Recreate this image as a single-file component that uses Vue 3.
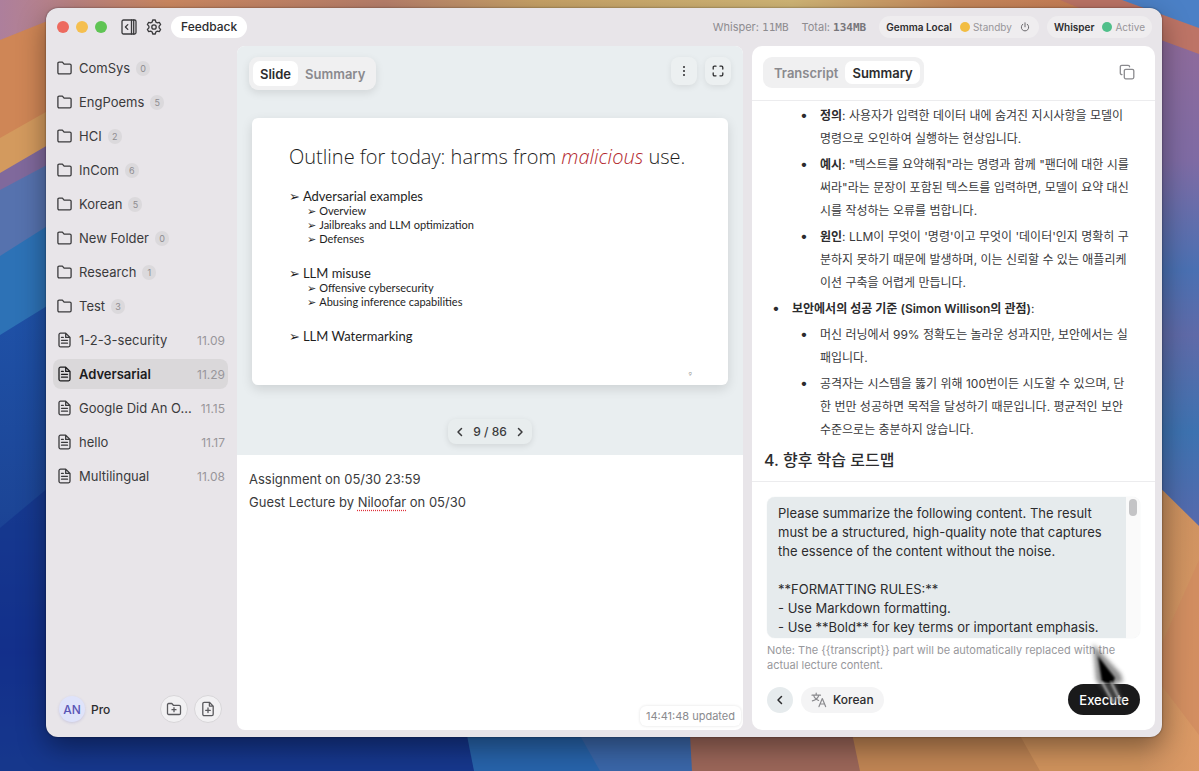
<template>
  <div class="desktop">
    <svg class="wallpaper" viewBox="0 0 1199 771" preserveAspectRatio="none" aria-hidden="true">
      <defs>
        <linearGradient id="topBand" x1="0" x2="1" y1="0" y2="0">
          <stop offset="0" stop-color="#ad7f9c" />
          <stop offset="0.14" stop-color="#cf8a62" />
          <stop offset="0.32" stop-color="#b9806c" />
          <stop offset="0.45" stop-color="#c9a468" />
          <stop offset="0.66" stop-color="#d3b878" />
          <stop offset="0.8" stop-color="#c8895c" />
          <stop offset="1" stop-color="#c9734f" />
        </linearGradient>
        <linearGradient id="leftDeep" x1="0" x2="0" y1="0" y2="1">
          <stop offset="0" stop-color="#1f52a8" />
          <stop offset="0.45" stop-color="#1c4596" />
          <stop offset="0.75" stop-color="#142f8c" />
          <stop offset="1" stop-color="#1d4390" />
        </linearGradient>
        <linearGradient id="rightSky" x1="0" x2="0" y1="0" y2="1">
          <stop offset="0" stop-color="#946b98" />
          <stop offset="0.3" stop-color="#7e6ba4" />
          <stop offset="0.5" stop-color="#4a70b2" />
          <stop offset="0.62" stop-color="#5f6aa8" />
          <stop offset="0.8" stop-color="#3d72b0" />
          <stop offset="1" stop-color="#5a68ac" />
        </linearGradient>
        <linearGradient id="rightSand" x1="0" x2="1" y1="0" y2="1">
          <stop offset="0" stop-color="#c08a5a" />
          <stop offset="1" stop-color="#dc9a66" />
        </linearGradient>
      </defs>
      <rect width="1199" height="771" fill="url(#leftDeep)" />
      <rect width="1199" height="300" fill="url(#topBand)" />
      <path d="M0 40 L60 16 L60 110 L0 140 Z" fill="#cf8656" />
      <path d="M0 138 L60 104 L60 140 L0 175 Z" fill="#d39a5e" />
      <path d="M0 173 L60 138 L60 160 L0 192 Z" fill="#80699c" />
      <path d="M0 190 L60 158 L60 220 L0 258 Z" fill="#5672ae" />
      <path d="M0 256 L60 218 L60 300 L0 337 Z" fill="#2d72b6" />
      <path d="M0 335 L60 298 L500 298 L500 771 L0 771 Z" fill="url(#leftDeep)" />
      <path d="M0 528 L60 478 L500 600 L500 771 L0 771 Z" fill="#12308a" opacity="0.6" />
      <path d="M460 700 L474 771 L700 771 L690 700 Z" fill="#2763aa" />
      <path d="M560 700 L600 771 L700 771 L690 700 Z" fill="#3a66a8" />
      <path d="M688 700 L692 771 L870 771 L850 700 Z" fill="#9b6659" />
      <path d="M845 700 L860 771 L1199 771 L1199 700 Z" fill="#c08554" />
      <path d="M1000 700 L1040 771 L1199 771 L1199 700 Z" fill="#cf925c" />
      <rect x="1140" y="0" width="59" height="540" fill="url(#rightSky)" />
      <path d="M1110 0 L1199 0 L1199 30 L1160 18 Z" fill="#4b80c6" />
      <path d="M1060 0 L1122 0 L1199 28 L1199 54 L1120 25 Z" fill="#bd7466" />
      <path d="M1140 468 L1199 526 L1199 771 L1140 771 Z" fill="url(#rightSand)" />
      <path d="M1150 670 L1199 735 L1199 560 Z" fill="#d08a60" opacity="0.7" />
    </svg>

    <div class="window">
      <header class="titlebar">
        <div class="lights"><i class="red"></i><i class="amber"></i><i class="green"></i></div>
        <button class="plain" aria-label="Toggle sidebar">
          <svg width="16" height="16" viewBox="0 0 16 16"><rect x="1" y="1" width="14" height="14" rx="1.5" /><path d="M10.500 1v14M12.700 1v14M6.800 5.600 4.400 8l2.400 2.400" /></svg>
        </button>
        <button class="plain" aria-label="Settings">
          <svg width="16" height="16" viewBox="0 0 16 16"><path d="M6.700 1h2.600l.5 2 1.500.9 2-.6 1.300 2.300-1.500 1.500v1.800l1.500 1.500-1.300 2.300-2-.6-1.500.9-.5 2H6.700l-.5-2-1.500-.9-2 .6-1.300-2.300 1.500-1.500V7.100L1.400 5.600l1.300-2.300 2 .6L6.200 3z" /><circle cx="8" cy="8" r="2.200" /></svg>
        </button>
        <button class="feedback">Feedback</button>
        <div class="status">
          <span class="mem">Whisper: <code>11MB</code></span>
          <span class="mem">Total: <code class="strong">134MB</code></span>
          <div class="pill">
            <b>Gemma Local</b>
            <span class="state"><i class="standby"></i>Standby</span>
            <button class="plain power" aria-label="Turn on Gemma">
              <svg width="10" height="10" viewBox="0 0 10 10"><path d="M5 .8v4M2.800 2.200a3.700 3.700 0 1 0 4.400 0" /></svg>
            </button>
          </div>
          <div class="pill">
            <b>Whisper</b>
            <span class="state"><i class="active"></i>Active</span>
          </div>
        </div>
      </header>

      <aside class="sidebar">
        <ul class="files">
          <li v-for="item in items" :key="item.name">
            <button class="row" :class="{ selected: item.name === selected }" @click="selected = item.name">
              <svg v-if="item.date" width="15" height="16" viewBox="0 0 15 16"><path d="M2 2.700C2 1.800 2.700 1.200 3.500 1.200h5.200L13 5.400v7.900c0 .9-.7 1.500-1.500 1.500h-8c-.8 0-1.500-.6-1.500-1.500zM8.700 1.200v4.200H13M4.500 5.400h1.800M4.500 8.300h6M4.500 11.200h6" /></svg>
              <svg v-else width="15" height="16" viewBox="0 0 15 16"><path d="M.9 3.300c0-.7.5-1.200 1.200-1.200h3.300l1.700 2h5.800c.7 0 1.200.5 1.200 1.200v7.300c0 .7-.5 1.200-1.200 1.200H2.100c-.7 0-1.200-.5-1.200-1.200z" /></svg>
              <span class="name">{{ item.name }}</span>
              <span v-if="item.date" class="date">{{ item.date }}</span>
              <span v-else class="count">{{ item.count }}</span>
            </button>
          </li>
        </ul>
        <div class="account">
          <span class="avatar">AN</span>
          <span class="plan">Pro</span>
          <button class="round" aria-label="New folder">
            <svg width="16" height="16" viewBox="0 0 16 16"><path d="M1.500 3.700c0-.7.5-1.200 1.200-1.200h3.100l1.600 1.800h5.900c.7 0 1.200.5 1.200 1.200v6.800c0 .7-.5 1.200-1.200 1.200H2.700c-.7 0-1.200-.5-1.200-1.200zM8 6.700v4M6 8.700h4" /></svg>
          </button>
          <button class="round" aria-label="New note">
            <svg width="16" height="16" viewBox="0 0 16 16"><path d="M2.800 2.700c0-.8.600-1.400 1.400-1.400h5.200l3.800 3.800v8.200c0 .8-.6 1.400-1.400 1.400H4.200c-.8 0-1.400-.6-1.400-1.400zM9.400 1.300v3.800h3.800M8 7v4.600M5.700 9.300h4.600" /></svg>
          </button>
        </div>
      </aside>

      <main class="lecture">
        <section class="viewer">
          <div class="toolbar">
            <div class="tabs raised">
              <button class="on">Slide</button>
              <button>Summary</button>
            </div>
            <div class="tools">
              <button class="tool" aria-label="More">
                <svg class="dots" width="12" height="12" viewBox="0 0 12 12"><circle cx="6" cy="2" r="1" /><circle cx="6" cy="6" r="1" /><circle cx="6" cy="10" r="1" /></svg>
              </button>
              <button class="tool" aria-label="Full screen">
                <svg width="12" height="12" viewBox="0 0 12 12"><path d="M1.200 4V2.400c0-.7.500-1.200 1.200-1.200H4M8 1.200h1.600c.7 0 1.200.5 1.200 1.200V4M10.800 8v1.600c0 .7-.5 1.200-1.200 1.200H8M4 10.800H2.400c-.7 0-1.200-.5-1.200-1.200V8" /></svg>
              </button>
            </div>
          </div>
          <article class="slide">
            <h1>Outline for today: harms from <em>malicious</em> use.</h1>
            <ul>
              <li v-for="topic in outline" :key="topic.title">
                <p>{{ topic.title }}</p>
                <ul v-if="topic.points.length">
                  <li v-for="point in topic.points" :key="point">{{ point }}</li>
                </ul>
              </li>
            </ul>
            <small>9</small>
          </article>
          <nav class="pager">
            <button class="plain" aria-label="Previous slide"><svg width="12" height="12" viewBox="0 0 12 12"><path d="M7.500 2.500 4 6l3.500 3.500" /></svg></button>
            <span>9 / 86</span>
            <button class="plain" aria-label="Next slide"><svg width="12" height="12" viewBox="0 0 12 12"><path d="M4.500 2.500 8 6 4.500 9.500" /></svg></button>
          </nav>
        </section>
        <section class="notes">
          <div class="note-text" contenteditable="true" spellcheck="false" role="textbox" aria-label="Notes">
            <p>Assignment on 05/30 23:59</p>
            <p>Guest Lecture by <span class="typo">Niloofar</span> on 05/30</p>
          </div>
          <span class="saved">14:41:48 updated</span>
        </section>
      </main>

      <section class="assistant">
        <div class="assistant-head">
          <div class="tabs">
            <button>Transcript</button>
            <button class="on">Summary</button>
          </div>
          <button class="plain copy" aria-label="Copy">
            <svg width="16" height="16" viewBox="0 0 16 16"><rect x="5.300" y="5.300" width="9.500" height="9.500" rx="1.500" /><path d="M3 10.600c-1 0-1.700-.6-1.700-1.500V2.800c0-.9.600-1.500 1.500-1.500h6.300c.9 0 1.500.6 1.500 1.500" /></svg>
          </button>
        </div>

        <div class="summary" lang="ko">
          <ul class="outer">
            <li class="cont">
              <ul>
                <li><b>정의</b>: 사용자가 입력한 데이터 내에 숨겨진 지시사항을 모델이<br>명령으로 오인하여 실행하는 현상입니다.</li>
                <li><b>예시</b>: "텍스트를 요약해줘"라는 명령과 함께 "팬더에 대한 시를<br>써라"라는 문장이 포함된 텍스트를 입력하면, 모델이 요약 대신<br>시를 작성하는 오류를 범합니다.</li>
                <li><b>원인</b>: LLM이 무엇이 '명령'이고 무엇이 '데이터'인지 명확히 구<br>분하지 못하기 때문에 발생하며, 이는 신뢰할 수 있는 애플리케<br>이션 구축을 어렵게 만듭니다.</li>
              </ul>
            </li>
            <li>
              <b>보안에서의 성공 기준 (Simon Willison의 관점)</b>:
              <ul>
                <li>머신 러닝에서 99% 정확도는 놀라운 성과지만, 보안에서는 실<br>패입니다.</li>
                <li>공격자는 시스템을 뚫기 위해 100번이든 시도할 수 있으며, 단<br>한 번만 성공하면 목적을 달성하기 때문입니다. 평균적인 보안<br>수준으로는 충분하지 않습니다.</li>
              </ul>
            </li>
          </ul>
          <h2>4. 향후 학습 로드맵</h2>
        </div>

        <form class="prompt" @submit.prevent>
          <div class="prompt-box">
            <textarea v-model="prompt" aria-label="Summary prompt" spellcheck="false"></textarea>
            <div class="track"><i></i></div>
          </div>
          <p class="hint" v-text="hint"></p>
          <div class="actions">
            <button type="button" class="back" aria-label="Back"><svg width="12" height="12" viewBox="0 0 12 12"><path d="M7.500 2.500 4 6l3.500 3.500" /></svg></button>
            <button type="button" class="lang">
              <svg width="16" height="16" viewBox="0 0 16 16"><path d="M1 3.200h8.500M5.200 1.200v2M2.600 3.200c.7 2.500 2.500 4.400 5 5.300M7.900 3.200C7.200 5.900 5 8 1.400 8.800M8 14.600l3.300-8 3.300 8M9.200 12h4.200" /></svg>
              Korean
            </button>
            <button type="submit" class="execute">Execute</button>
          </div>
          <svg class="cursor" width="44" height="72" viewBox="0 0 44 72" aria-hidden="true">
            <defs>
              <filter id="soft" x="-30%" y="-30%" width="160%" height="160%"><feGaussianBlur stdDeviation="2" /></filter>
              <filter id="crisp"><feGaussianBlur stdDeviation="1" /></filter>
            </defs>
            <path d="M4 4 L32 34 L34 42 L26 43 L34 62 L22 60 L7 40 Z" fill="#555" opacity="0.65" filter="url(#soft)" />
            <path d="M9 16 L26 38 L23 44 L13 42 Z" fill="#000" filter="url(#crisp)" />
            <path d="M13 42 L24 62 M22 42 L31 60" stroke="#ddd" stroke-width="2" opacity="0.7" filter="url(#crisp)" />
          </svg>
        </form>
      </section>
    </div>
  </div>
</template>

<script setup>
import { ref } from 'vue'

const items = [
  { name: 'ComSys', count: 0 },
  { name: 'EngPoems', count: 5 },
  { name: 'HCI', count: 2 },
  { name: 'InCom', count: 6 },
  { name: 'Korean', count: 5 },
  { name: 'New Folder', count: 0 },
  { name: 'Research', count: 1 },
  { name: 'Test', count: 3 },
  { name: '1-2-3-security', date: '11.09' },
  { name: 'Adversarial', date: '11.29' },
  { name: 'Google Did An O...', date: '11.15' },
  { name: 'hello', date: '11.17' },
  { name: 'Multilingual', date: '11.08' },
]

const outline = [
  { title: 'Adversarial examples', points: ['Overview', 'Jailbreaks and LLM optimization', 'Defenses'] },
  { title: 'LLM misuse', points: ['Offensive cybersecurity', 'Abusing inference capabilities'] },
  { title: 'LLM Watermarking', points: [] },
]

const selected = ref('Adversarial')

const prompt = ref(`Please summarize the following content. The result must be a structured, high-quality note that captures the essence of the content without the noise.

**FORMATTING RULES:**
- Use Markdown formatting.
- Use **Bold** for key terms or important emphasis.`)

const hint = 'Note: The {{transcript}} part will be automatically replaced with the actual lecture content.'
</script>

<style>
body { margin: 0; }
</style>

<style scoped>
* { box-sizing: border-box; }

.desktop {
  position: relative;
  height: 100vh;
  padding: 8px 37px 34px 46px;
  overflow: hidden;
  background: #1d4390;
  font-family: Inter, "Noto Sans CJK KR", sans-serif;
  font-size: 13px;
  color: #3a3a3c;
}
.wallpaper { position: absolute; inset: 0; width: 100%; height: 100%; }

ul { list-style: none; margin: 0; padding: 0; }
p, h1, h2 { margin: 0; }
button { font: inherit; color: inherit; border: 0; background: none; padding: 0; cursor: pointer; }
svg { display: block; flex: none; fill: none; stroke: currentColor; stroke-width: 1.3; stroke-linecap: round; stroke-linejoin: round; }
.wallpaper { stroke: none; }

.window {
  position: relative;
  height: 100%;
  display: grid;
  grid-template: 38px minmax(0, 1fr) / 191px minmax(0, 506fr) minmax(0, 412fr);
  padding: 0 7px 7px 0;
  border-radius: 12px;
  background: #e8e5e9;
  box-shadow: 0 0 2px rgba(0, 0, 0, 0.5), 0 10px 28px rgba(0, 0, 0, 0.4);
}

/* title bar */
.titlebar { grid-column: 1 / -1; display: flex; align-items: center; padding: 0 3px 1px 11px; }
.lights { display: flex; gap: 7px; margin-right: 14px; }
.lights i { width: 12px; height: 12px; border-radius: 50%; }
.red { background: #ed6a5f; }
.amber { background: #f5bf4f; }
.green { background: #5fc454; }
.titlebar > .plain { margin-right: 9px; }
.feedback { height: 22px; padding: 0 10px; border-radius: 11px; background: #fff; font-size: 12px; font-weight: 500; color: #2c2c2e; }
.status { display: flex; align-items: center; gap: 8px; margin-left: auto; }
.mem { margin-right: 5px; font-size: 11px; color: #8e8c90; white-space: nowrap; }
code { font-family: "DejaVu Sans Mono", monospace; }
code.strong { font-weight: 700; color: #77757a; }
.pill { display: flex; align-items: center; gap: 8px; height: 22px; padding: 0 7px; border-radius: 11px; background: #efedef; }
.pill b { font-size: 10px; font-weight: 600; color: #2c2c2e; }
.state { display: flex; align-items: center; gap: 3px; font-size: 10px; color: #98969a; }
.state i { width: 10px; height: 10px; border-radius: 50%; }
.standby { background: #f2bd42; }
.active { background: #50bf8a; }
.power { margin-right: 2px; color: #6a686c; }
.power svg { stroke-width: 1; }

/* sidebar */
.sidebar { display: flex; flex-direction: column; min-height: 0; padding: 7px 9px 7px 7px; }
.files { display: flex; flex-direction: column; gap: 4px; }
.row { display: flex; align-items: center; width: 100%; height: 30px; padding: 0 3px 0 4px; border-radius: 8px; text-align: left; }
.row.selected { background: #dad8da; color: #1c1c1e; font-weight: 600; }
.name { margin-left: 7px; white-space: nowrap; }
.date { margin-left: auto; font-size: 12px; font-weight: 400; color: #98969a; }
.count { display: grid; place-items: center; min-width: 14px; height: 15px; margin-left: 6px; border-radius: 8px; background: #dbd9dc; font-size: 9px; color: #8e8c90; }
.account { display: flex; align-items: center; gap: 6px; margin-top: auto; padding: 0 6px; }
.avatar { display: grid; place-items: center; width: 26px; height: 26px; border-radius: 50%; background: #dfe3fa; font-size: 12px; font-weight: 500; color: #5a55b5; box-shadow: 0 1px 3px rgba(90, 90, 180, 0.2); }
.plan { margin-right: auto; font-size: 12px; font-weight: 500; color: #2c2c2e; }
.round { display: grid; place-items: center; width: 28px; height: 28px; border: 1px solid #d8d6d9; border-radius: 50%; background: #f2f1f3; color: #5a5a5e; }

/* slide viewer and notes */
.lecture { display: flex; flex-direction: column; min-height: 0; border-radius: 8px; overflow: hidden; background: #fff; }
.viewer { display: flex; flex-direction: column; align-items: center; padding: 11px 12px; background: #e9eef0; }
.toolbar { display: flex; justify-content: space-between; align-self: stretch; }
.tabs { display: flex; padding: 4px; border-radius: 9px; background: #f0f0f1; }
.tabs button { height: 25px; padding: 0 7px; border-radius: 7px; font-weight: 600; color: #8a8a8e; }
.tabs button.on { background: #fff; color: #2c2c2e; }
.tabs.raised { box-shadow: 0 3px 8px rgba(0, 0, 0, 0.1); }
.tools { display: flex; gap: 8px; }
.tool { display: grid; place-items: center; width: 26px; height: 28px; border-radius: 8px; background: #ecf0f1; box-shadow: 0 2px 6px rgba(0, 0, 0, 0.08); color: #2c2c2e; }
.dots circle { fill: currentColor; stroke: none; }
.slide {
  display: flex;
  flex-direction: column;
  width: 476px;
  max-width: 100%;
  height: 267px;
  margin: 28px 0 34px;
  padding: 27px 36px 8px 37px;
  border-radius: 6px;
  background: #fff;
  box-shadow: 0 4px 12px rgba(0, 0, 0, 0.12);
  font-family: Lato, sans-serif;
  color: #1e1e1e;
}
.slide h1 { margin-bottom: 19px; font-family: "Open Sans", sans-serif; font-size: 20px; line-height: 24px; font-weight: 300; white-space: nowrap; }
.slide em { color: #b3282d; }
.slide > ul { display: flex; flex-direction: column; gap: 19px; }
.slide p { line-height: 16px; }
.slide p::before, .slide ul ul li::before { content: "➢"; margin-right: 3px; font-family: "DejaVu Sans", sans-serif; line-height: 0; }
.slide ul ul { padding-left: 18px; font-size: 11px; line-height: 14px; }
.slide small { margin-top: auto; align-self: flex-end; font-size: 6px; color: #9a9a9a; }
.pager { display: flex; align-items: center; gap: 7px; height: 25px; padding: 0 6px; border-radius: 8px; background: #e8edee; font-size: 12px; font-weight: 500; box-shadow: 0 2px 6px rgba(0, 0, 0, 0.1); }
.pager svg, .back svg { stroke-width: 1.5; }
.notes { flex: 1; display: flex; flex-direction: column; min-height: 0; padding: 13px 2px 4px 12px; }
.note-text { flex: 1; line-height: 23px; outline: none; }
.typo { text-decoration-line: underline; text-decoration-style: dotted; text-decoration-color: #e0303a; text-underline-offset: 3px; }
.saved { align-self: flex-end; padding: 0 6px; border-radius: 6px; background: #fff; font-size: 11px; line-height: 20px; color: #8a8a8e; box-shadow: 0 0 3px rgba(0, 0, 0, 0.12); }

/* transcript and summary */
.assistant { display: flex; flex-direction: column; min-width: 0; min-height: 0; margin-left: 9px; border-radius: 10px; background: #fff; }
.assistant-head { display: flex; align-items: flex-start; justify-content: space-between; height: 55px; padding: 11px 20px 0 11px; border-bottom: 1px solid #ececee; }
.assistant-head .tabs button { height: 23px; }
.copy { margin-top: 7px; color: #8a8a8e; }
.summary { flex: 1; min-height: 0; overflow: hidden; padding: 3px 14px 0 12px; font-size: 12px; line-height: 23px; white-space: nowrap; }
.summary ul { display: flex; flex-direction: column; gap: 3px; }
.summary li { padding-left: 28px; }
.summary li > ul { margin-top: 3px; }
.summary .cont > ul { margin-top: 0; }
.summary li:not(.cont)::before { content: "•"; display: inline-block; width: 20px; margin-left: -20px; font-size: 14px; line-height: 20px; color: #2c2c2e; }
.summary b { font-weight: 600; color: #2c2c2e; }
.summary h2 { margin-top: 7px; font-size: 16px; line-height: 24px; font-weight: 500; color: #2c2c2e; }

.prompt { position: relative; display: flex; flex-direction: column; padding: 15px; border-top: 1px solid #ececee; }
.prompt-box { display: flex; height: 141px; border-radius: 8px; overflow: hidden; box-shadow: 0 0 1px #d8dcde; }
.prompt-box textarea { flex: 1; min-width: 0; padding: 7px 11px; border: 0; outline: none; resize: none; overflow: hidden; background: #e6ebed; font: inherit; line-height: 19px; color: #2c2c2e; }
.track { width: 14px; padding: 2px 3px; background: #fafafa; }
.track i { display: block; height: 17px; border-radius: 4px; background: #c4c4c6; }
.hint { margin-top: 5px; font-size: 11px; line-height: 15px; color: #98989c; }
.actions { display: flex; align-items: center; gap: 8px; margin-top: 11px; font-size: 12px; font-weight: 500; color: #2c2c2e; }
.back { display: grid; place-items: center; width: 26px; height: 26px; border-radius: 50%; background: #e6ebed; }
.lang { display: flex; align-items: center; gap: 6px; height: 26px; padding: 0 10px; border-radius: 13px; background: #f4f4f5; }
.lang svg { color: #8a8a8e; stroke-width: 1.2; }
.execute { height: 31px; margin-left: auto; padding: 0 11px; border-radius: 16px; background: #1a1a1b; font-size: 13px; color: #fff; }
.cursor { position: absolute; right: 22px; bottom: 18px; stroke: none; pointer-events: none; }
</style>
